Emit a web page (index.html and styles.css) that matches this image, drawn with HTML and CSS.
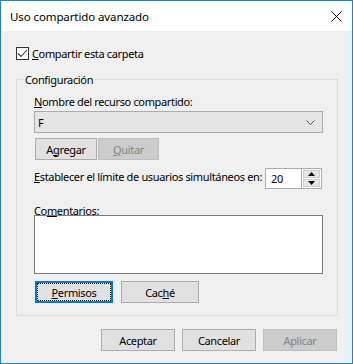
FILE: index.html
```html
<!DOCTYPE html>
<html lang="es">
<head>
    <meta charset="UTF-8">
    <meta name="viewport" content="width=device-width, initial-scale=1.0">
    <title>Uso compartido avanzado</title>
    <link rel="stylesheet" href="styles.css">
</head>
<body>
    <div class="window">
        <div class="titlebar">
            <span class="title">Uso compartido avanzado</span>
            <svg class="close" width="11" height="11" viewBox="0 0 11 11">
                <path d="M0.5 0.5L10.5 10.5M10.5 0.5L0.5 10.5" stroke="#000" stroke-width="1" fill="none"/>
            </svg>
        </div>

        <div class="content">
            <div class="check-row">
                <span class="checkbox">
                    <svg width="11" height="11" viewBox="0 0 11 11">
                        <path d="M1 5.5L4 8.5L10 2" stroke="#333" stroke-width="1.1" fill="none"/>
                    </svg>
                </span>
                <span><u>C</u>ompartir esta carpeta</span>
            </div>

            <fieldset class="group">
                <legend>Configuración</legend>
                <div class="group-body">
                    <div class="label"><u>N</u>ombre del recurso compartido:</div>
                    <div class="select">
                        <span>F</span>
                        <svg width="9" height="5" viewBox="0 0 9 5">
                            <path d="M0.5 0.5L4.5 4.5L8.5 0.5" stroke="#555" stroke-width="1" fill="none"/>
                        </svg>
                    </div>

                    <div class="btn-row tight">
                        <button class="btn share-btn">A<u>g</u>regar</button>
                        <button class="btn share-btn quit" disabled><u>Q</u>uitar</button>
                    </div>

                    <div class="limit-row">
                        <span class="limit-text"><u>E</u>stablecer el límite de usuarios simultáneos en:</span>
                        <div class="spin">
                            <span class="spin-value">20</span>
                            <div class="spin-btns">
                                <span class="spin-btn">
                                    <svg width="7" height="4" viewBox="0 0 7 4"><path d="M3.5 0L7 4H0Z" fill="#000"/></svg>
                                </span>
                                <span class="spin-btn">
                                    <svg width="7" height="4" viewBox="0 0 7 4"><path d="M0 0H7L3.5 4Z" fill="#000"/></svg>
                                </span>
                            </div>
                        </div>
                    </div>

                    <div class="label comments-label">Co<u>m</u>entarios:</div>
                    <div class="textarea"></div>

                    <div class="btn-row wide">
                        <button class="btn mid-btn focused"><u>P</u>ermisos</button>
                        <button class="btn mid-btn">Cac<u>h</u>é</button>
                    </div>
                </div>
            </fieldset>

            <div class="footer">
                <button class="btn footer-btn">Aceptar</button>
                <button class="btn footer-btn">Cancelar</button>
                <button class="btn footer-btn" disabled>Aplicar</button>
            </div>
        </div>
    </div>
</body>
</html>
```

FILE: styles.css
```css
body {
    margin: 0;
    font-family: "Noto Sans", sans-serif;
    font-size: 11px;
    letter-spacing: -0.35px;
    line-height: 15px;
    color: #000;
}

.window {
    width: 353px;
    height: 364px;
    box-sizing: border-box;
    border: 1px solid #1883d7;
    display: flex;
    flex-direction: column;
}

.titlebar {
    height: 30px;
    background-color: #fff;
    display: flex;
    align-items: center;
    justify-content: space-between;
    padding: 0 10px 0 9px;
    flex-shrink: 0;
}

.title {
    font-size: 11.5px;
    letter-spacing: -0.1px;
}

.close {
    margin-top: 1px;
}

.content {
    flex: 1;
    background-color: #f0f0f0;
    padding: 0 14px 0 15px;
}

/* Checkbox row */
.check-row {
    margin-top: 16px;
    height: 13px;
    display: flex;
    align-items: center;
    gap: 3px;
}

.checkbox {
    width: 13px;
    height: 13px;
    box-sizing: border-box;
    border: 1px solid #333;
    background-color: #fff;
    display: flex;
    align-items: center;
    justify-content: center;
}

/* Group box */
.group {
    margin: 12px 0 0 0;
    padding: 0;
    border: 1px solid #dcdcdc;
    min-width: 0;
}

.group legend {
    margin-left: 7px;
    padding: 0 1px;
}

.group-body {
    padding: 7px 14px 12px 17px;
}

.select {
    margin-top: 2px;
    height: 22px;
    box-sizing: border-box;
    border: 1px solid #acacac;
    background-color: #e5e5e5;
    display: flex;
    align-items: center;
    justify-content: space-between;
    padding: 0 7px 0 3px;
}

.btn-row {
    display: flex;
    margin-left: 1px;
}

.btn-row.tight {
    margin-top: 5px;
    gap: 1px;
}

.btn-row.wide {
    margin-top: 7px;
    gap: 8px;
}

.btn {
    height: 22px;
    box-sizing: border-box;
    border: 1px solid #adadad;
    background-color: #e1e1e1;
    font-family: inherit;
    font-size: 11px;
    letter-spacing: -0.35px;
    line-height: 15px;
    color: #000;
    padding: 0;
    text-align: center;
}

.btn:disabled {
    background-color: #cccccc;
    border-color: #bfbfbf;
    color: #838383;
}

.share-btn {
    width: 62px;
}

.share-btn.quit {
    width: 61px;
}

.mid-btn {
    width: 78px;
}

.btn.focused {
    border: 2px solid #0078d7;
    outline: 1px dotted #000;
    outline-offset: -3px;
}

/* Concurrent users row */
.limit-row {
    margin-top: 8px;
    display: flex;
    justify-content: space-between;
    align-items: flex-start;
}

.limit-text {
    padding-top: 1px;
    white-space: nowrap;
}

.spin {
    width: 57px;
    height: 21px;
    box-sizing: border-box;
    border: 1px solid #acacac;
    background-color: #fff;
    display: flex;
    margin-right: 1px;
    flex-shrink: 0;
}

.spin-value {
    flex: 1;
    padding: 2px 0 0 5px;
}

.spin-btns {
    width: 17px;
    display: flex;
    flex-direction: column;
    border-left: 1px solid #acacac;
    padding: 1px;
    gap: 1px;
}

.spin-btn {
    flex: 1;
    background-color: #e5e5e5;
    border: 1px solid #cfcfcf;
    display: flex;
    align-items: center;
    justify-content: center;
}

.comments-label {
    margin-top: 14px;
    height: 12px;
}

.textarea {
    height: 59px;
    box-sizing: border-box;
    border: 1px solid #7a7a7a;
    background-color: #fff;
}

/* Bottom buttons */
.footer {
    margin-top: 13px;
    display: flex;
    justify-content: flex-end;
    gap: 7px;
    padding-right: 1px;
}

.footer-btn {
    width: 74px;
}
```
